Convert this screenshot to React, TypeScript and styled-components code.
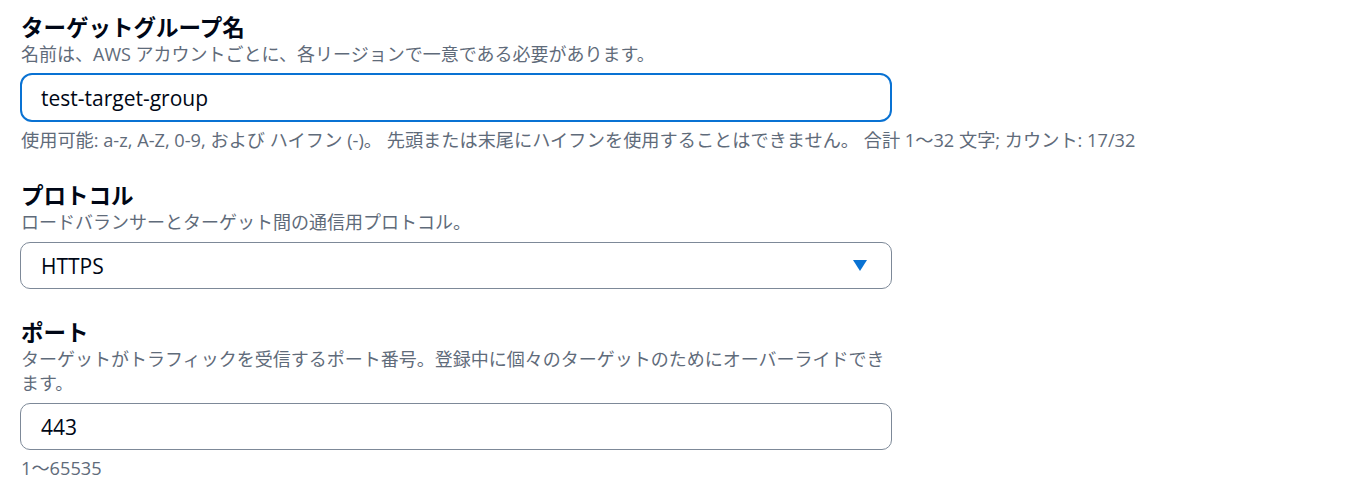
import React from "react";
import styled, { createGlobalStyle } from "styled-components";

const Global = createGlobalStyle`
  html, body { margin: 0; padding: 0; background: #ffffff; }
  body { font-family: "Open Sans", "Noto Sans CJK JP", sans-serif; color: #000716; }
`;

const Page = styled.div`
  padding: 14px 0 0 20px;
  width: 872px;
  display: flex;
  flex-direction: column;
  gap: 30px;
`;

const Field = styled.section`
  display: flex;
  flex-direction: column;
`;

const Label = styled.div`
  font-size: 22.5px;
  font-weight: 700;
  line-height: 28px;
  color: #000716;
  padding-left: 1px;
`;

const Description = styled.div`
  font-size: 18px;
  line-height: 24px;
  color: #5f6b7a;
  padding-left: 1px;
`;

const Control = styled.div<{ $focused?: boolean }>`
  margin-top: ${(p) => (p.$focused ? "7px" : "8px")};
  box-sizing: border-box;
  height: ${(p) => (p.$focused ? "49px" : "47px")};
  border: ${(p) => (p.$focused ? "2px solid #0972d3" : "1px solid #7d8998")};
  border-radius: ${(p) => (p.$focused ? "12px" : "10px")};
  display: flex;
  align-items: center;
  justify-content: space-between;
  padding: 0 24px 0 ${(p) => (p.$focused ? "19px" : "20px")};
  font-size: 21px;
  color: #000716;
`;

const Hint = styled.div`
  margin-top: 6px;
  font-size: 18.2px;
  line-height: 24px;
  color: #5f6b7a;
  padding-left: 1px;
  white-space: nowrap;
`;

const Caret = styled.svg`
  width: 14px;
  height: 11px;
  display: block;
`;

export default function App() {
  return (
    <>
      <Global />
      <Page>
        <Field>
          <Label>ターゲットグループ名</Label>
          <Description>名前は、AWS アカウントごとに、各リージョンで一意である必要があります。</Description>
          <Control $focused>test-target-group</Control>
          <Hint>
            使用可能: a-z, A-Z, 0-9, および ハイフン (-)。 先頭または末尾にハイフンを使用することはできません。 合計 1〜32 文字; カウント: 17/32
          </Hint>
        </Field>
        <Field>
          <Label>プロトコル</Label>
          <Description>ロードバランサーとターゲット間の通信用プロトコル。</Description>
          <Control>
            <span>HTTPS</span>
            <Caret viewBox="0 0 14 11">
              <path d="M0 0 H14 L7 11 Z" fill="#0972d3" />
            </Caret>
          </Control>
        </Field>
        <Field>
          <Label>ポート</Label>
          <Description>
            ターゲットがトラフィックを受信するポート番号。登録中に個々のターゲットのためにオーバーライドできます。
          </Description>
          <Control>443</Control>
          <Hint>1〜65535</Hint>
        </Field>
      </Page>
    </>
  );
}
